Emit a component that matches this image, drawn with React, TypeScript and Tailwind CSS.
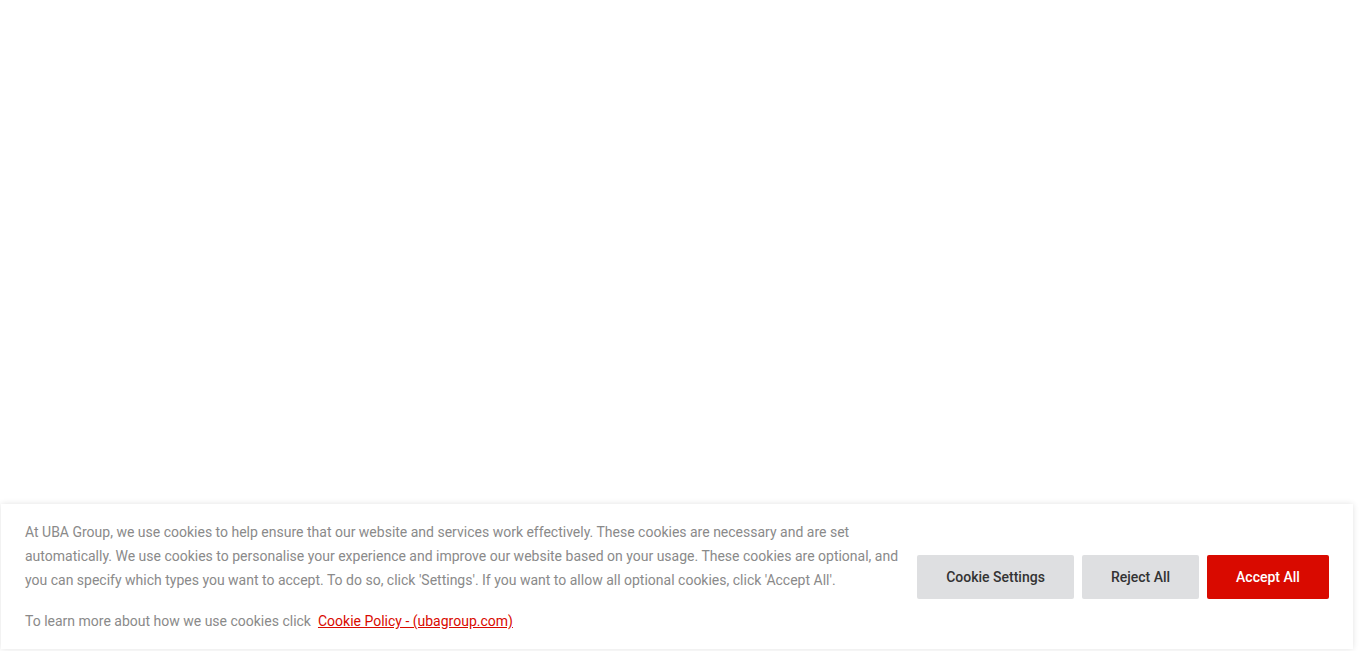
export default function App() {
  return (
    <div className="relative h-[651px] w-full overflow-hidden bg-white font-['Roboto',sans-serif]">
      <div className="absolute bottom-[2px] left-[1px] flex w-[1352px] items-center gap-4 bg-white py-4 pl-6 pr-6 shadow-[0_0_6px_rgba(0,0,0,0.12)]">
        <div className="w-[876px] text-[14px] leading-6 text-[#8a8a8a]">
          <p>
            At UBA Group, we use cookies to help ensure that our website and services work effectively. These cookies are necessary and are set
            automatically. We use cookies to personalise your experience and improve our website based on your usage. These cookies are optional, and
            you can specify which types you want to accept. To do so, click 'Settings'. If you want to allow all optional cookies, click 'Accept All'.
          </p>
          <p className="mt-[17px]">
            To learn more about how we use cookies click
            <a href="#" className="ml-[7px] text-[#d90a00] underline">
              Cookie Policy - (ubagroup.com)
            </a>
          </p>
        </div>
        <div className="ml-auto flex gap-2">
          <button className="h-11 w-[157px] rounded-[2px] bg-[#dedfe1] pt-[2px] text-[14px] font-medium text-[#333]">Cookie Settings</button>
          <button className="h-11 w-[117px] rounded-[2px] bg-[#dedfe1] pt-[2px] text-[14px] font-medium text-[#333]">Reject All</button>
          <button className="h-11 w-[122px] rounded-[2px] bg-[#d90a00] pt-[2px] text-[14px] font-medium text-white">Accept All</button>
        </div>
      </div>
    </div>
  );
}
